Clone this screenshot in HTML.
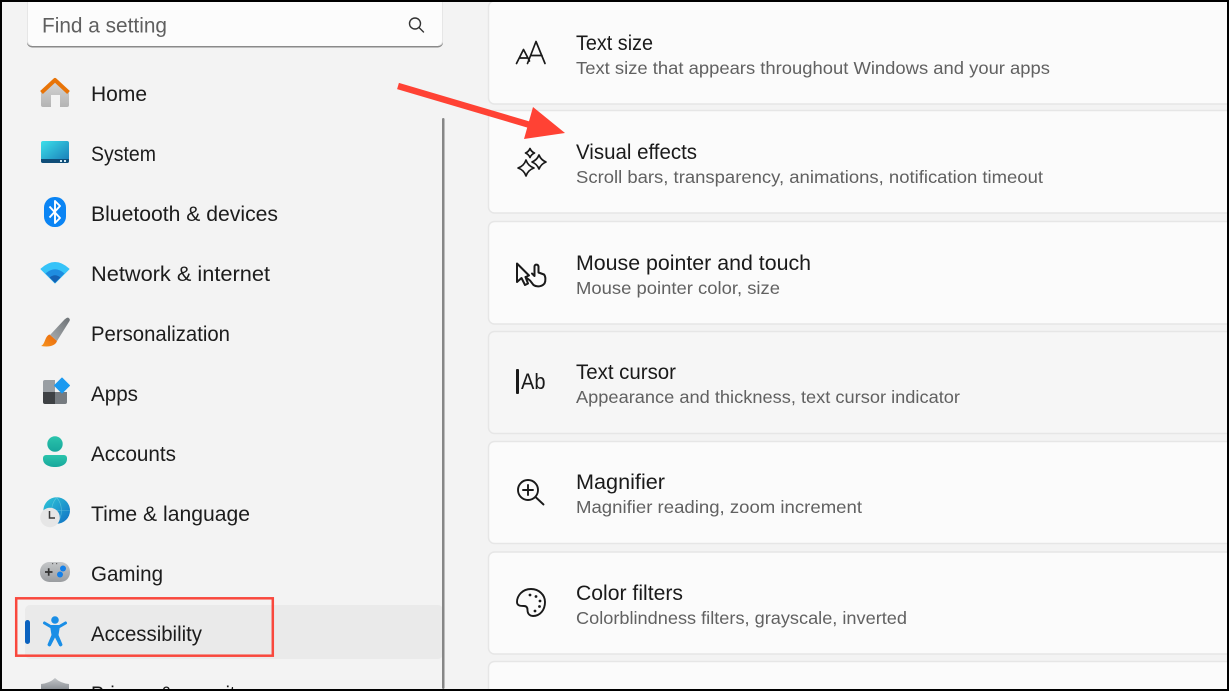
<!DOCTYPE html>
<html lang="en"><head><meta charset="utf-8"><title>Accessibility settings</title>
<style>
html,body{margin:0;padding:0;width:1229px;height:691px;overflow:hidden;background:#000}
svg{display:block}
text{font-family:"Liberation Sans",sans-serif}
.n{font-size:21px;fill:#1c1c1c}
.t{font-size:21px;fill:#1a1a1a}
.s{font-size:17.5px;fill:#616161}
.c{fill:#fbfbfb;stroke:#e6e6e6;stroke-width:1.5}
.i{fill:none;stroke:#1a1a1a;stroke-width:1.7;stroke-linecap:round;stroke-linejoin:round}
</style></head><body>
<svg width="1229" height="691" viewBox="0 0 1229 691" xmlns="http://www.w3.org/2000/svg">
<defs>
<linearGradient id="h" x1="0" y1="0" x2="0" y2="1"><stop offset="0" stop-color="#d8d8d8"/><stop offset="1" stop-color="#b4b4b4"/></linearGradient>
<linearGradient id="sy" x1="0" y1="0" x2="1" y2="1"><stop offset="0" stop-color="#3ce0ea"/><stop offset="1" stop-color="#1878b5"/></linearGradient>
<linearGradient id="br" x1="1" y1="0" x2="0" y2="1"><stop offset="0" stop-color="#6d7276"/><stop offset="1" stop-color="#a9adb0"/></linearGradient>
<linearGradient id="or" x1="0" y1="1" x2="1" y2="0"><stop offset="0" stop-color="#f7941d"/><stop offset="1" stop-color="#e8660c"/></linearGradient>
<linearGradient id="gl" x1="0" y1="0" x2="1" y2="1"><stop offset="0" stop-color="#2fc8d8"/><stop offset="1" stop-color="#0f6fc4"/></linearGradient>
<linearGradient id="ga" x1="0" y1="0" x2="0" y2="1"><stop offset="0" stop-color="#c4c6c8"/><stop offset="1" stop-color="#9a9da0"/></linearGradient>
<linearGradient id="te" x1="0" y1="0" x2="0" y2="1"><stop offset="0" stop-color="#2bc4ac"/><stop offset="1" stop-color="#17a79c"/></linearGradient>
<linearGradient id="sh" x1="0" y1="0" x2="0" y2="1"><stop offset="0" stop-color="#c2c5c8"/><stop offset="1" stop-color="#8f9398"/></linearGradient>
</defs>
<rect x="2" y="2" width="1225" height="687" fill="#f3f3f3"/>

<!-- search -->
<rect x="27" y="3" width="416" height="44.500" rx="5" fill="#8a8a8a"/>
<path d="M27 2H443V41a5 5 0 0 1-5 5H32a5 5 0 0 1-5-5Z" fill="#fcfcfc"/>
<path d="M27.500 2V41a4.500 4.500 0 0 0 4.500 4.500" fill="none" stroke="#e6e6e6"/>
<path d="M442.500 2V41a4.500 4.500 0 0 1-4.500 4.500" fill="none" stroke="#e6e6e6"/>
<text x="42" y="32.500" class="n" style="fill:#5f5f5f" textLength="125" lengthAdjust="spacingAndGlyphs">Find a setting</text>
<circle cx="415" cy="23.500" r="5.500" fill="none" stroke="#333" stroke-width="1.400"/>
<path d="M419 27.500l4.500 4.500" stroke="#333" stroke-width="1.400" stroke-linecap="round"/>

<!-- selected row -->
<rect x="25" y="605" width="418" height="54" rx="5" fill="#eaeaea"/>
<rect x="25" y="620" width="5" height="24" rx="2.500" fill="#0b62bf"/>

<!-- scrollbar -->
<rect x="442" y="118" width="2.500" height="571" rx="1.200" fill="#868686"/>

<!-- nav labels -->
<text x="91" y="101" class="n" textLength="56" lengthAdjust="spacingAndGlyphs">Home</text>
<text x="91" y="161" class="n" textLength="65" lengthAdjust="spacingAndGlyphs">System</text>
<text x="91" y="221" class="n" textLength="187" lengthAdjust="spacingAndGlyphs">Bluetooth &amp; devices</text>
<text x="91" y="281" class="n" textLength="179" lengthAdjust="spacingAndGlyphs">Network &amp; internet</text>
<text x="91" y="341" class="n" textLength="139" lengthAdjust="spacingAndGlyphs">Personalization</text>
<text x="91" y="401" class="n" textLength="47" lengthAdjust="spacingAndGlyphs">Apps</text>
<text x="91" y="461" class="n" textLength="85" lengthAdjust="spacingAndGlyphs">Accounts</text>
<text x="91" y="521" class="n" textLength="159" lengthAdjust="spacingAndGlyphs">Time &amp; language</text>
<text x="91" y="581" class="n" textLength="72" lengthAdjust="spacingAndGlyphs">Gaming</text>
<text x="91" y="641" class="n" textLength="111" lengthAdjust="spacingAndGlyphs">Accessibility</text>
<text x="91" y="701" class="n" textLength="154" lengthAdjust="spacingAndGlyphs">Privacy &amp; security</text>

<!-- nav icons -->
<path d="M41 107V91L55 79L69 91V105a2 2 0 0 1-2 2H60V95H51V107H43a2 2 0 0 1-2-2Z" fill="url(#h)"/>
<path d="M41.500 92.500L55 80L68.500 92.500" fill="none" stroke="#e87408" stroke-width="4" stroke-linejoin="round"/>

<rect x="41" y="141" width="28" height="22" rx="2" fill="url(#sy)"/>
<path d="M41 159H69V161a2 2 0 0 1-2 2H43a2 2 0 0 1-2-2Z" fill="#0f4d78"/>
<rect x="60" y="160" width="2" height="2" fill="#cfe8f4"/><rect x="64" y="160" width="2" height="2" fill="#cfe8f4"/>

<rect x="44" y="197" width="22" height="30" rx="10.500" fill="#0a84f4"/>
<path d="M49.500 206.500L60 218L55 223V201L60 206L49.500 217.500" fill="none" stroke="#fff" stroke-width="1.900" stroke-linejoin="round"/>

<path d="M41 269Q55 256 69 269L55 283Z" fill="#36c3f8" stroke="#36c3f8" stroke-linejoin="round"/>
<path d="M45.500 273.500Q55 265 64.500 273.500L55 283Z" fill="#1f8de0"/>
<path d="M49.500 277.500Q55 273 60.500 277.500L55 283Z" fill="#1462b4"/>

<path d="M66.500 318a2.200 2.200 0 0 1 3 3L57 341L50 335L64.500 319.500Z" fill="url(#br)"/>
<path d="M49.500 334.500L57 341C55.500 345.500 50 347.500 41 346C45.500 344 44.500 336.500 49.500 334.500Z" fill="url(#or)"/>

<path d="M43 382a2 2 0 0 1 2-2H55V392H43Z" fill="#999ea3"/>
<path d="M43 392H55V404H45a2 2 0 0 1-2-2Z" fill="#3e4144"/>
<path d="M55 392H67V402a2 2 0 0 1-2 2H55Z" fill="#767b80"/>
<path d="M62 378L69.500 385.500L62 393L54.500 385.500Z" fill="#1b9af0" stroke="#1b9af0" stroke-linejoin="round"/>

<circle cx="55" cy="444" r="7.700" fill="url(#te)"/>
<path d="M43 458a3 3 0 0 1 3-3H64a3 3 0 0 1 3 3V459C67 464 62 467 55 467S43 464 43 459Z" fill="url(#te)"/>

<circle cx="56.700" cy="510.500" r="13.300" fill="url(#gl)"/>
<path d="M43.500 510.500H70M56.700 497.500C50 505 50 516 56.700 524C63 516 63 505 56.700 497.500Z" fill="none" stroke="#9fe4ee" stroke-width=".6" opacity=".45"/>
<circle cx="50" cy="517.500" r="9.800" fill="#e6e6e6"/>
<path d="M49.500 511V518H55" fill="none" stroke="#3a3a3a" stroke-width="1.500"/>

<rect x="40" y="562" width="30" height="20" rx="9.500" fill="url(#ga)"/>
<path d="M45 572H52.500M48.700 568.300V575.700" stroke="#333" stroke-width="1.700"/>
<circle cx="63" cy="568.500" r="3" fill="#1580e8"/><circle cx="60" cy="574.500" r="3" fill="#1580e8"/>
<rect x="52" y="563" width="1.200" height="1.200" fill="#666"/><rect x="56" y="563" width="1.200" height="1.200" fill="#666"/>

<circle cx="55" cy="620" r="3.800" fill="#1a8ee6"/>
<path d="M44.500 623L50.500 626.500H59.500L65.500 623" fill="none" stroke="#1a8ee6" stroke-width="3" stroke-linecap="round" stroke-linejoin="round"/>
<path d="M50 626H60L58.500 635L62.500 644.500A1.900 1.900 0 0 1 59.200 645.800L55 637.500L50.800 645.800A1.900 1.900 0 0 1 47.500 644.500L51.500 635Z" fill="#1a8ee6"/>

<path d="M41 684Q50 683 55 678Q60 683 69 684V689H41Z" fill="url(#sh)"/>

<!-- cards -->
<rect x="488.500" y="1" width="745" height="103" rx="6" class="c"/>
<rect x="488.500" y="110.500" width="745" height="102.500" rx="6" class="c"/>
<rect x="488.500" y="221.500" width="745" height="102.500" rx="6" class="c"/>
<rect x="488.500" y="331.500" width="745" height="102" rx="6" class="c" style="fill:#f6f6f6"/>
<rect x="488.500" y="441.500" width="745" height="102" rx="6" class="c"/>
<rect x="488.500" y="552" width="745" height="102" rx="6" class="c"/>
<rect x="488.500" y="661.500" width="745" height="60" rx="6" class="c"/>

<text x="576" y="50" class="t" textLength="77" lengthAdjust="spacingAndGlyphs">Text size</text>
<text x="576" y="74" class="s" textLength="474" lengthAdjust="spacingAndGlyphs">Text size that appears throughout Windows and your apps</text>
<text x="576" y="159" class="t" textLength="121" lengthAdjust="spacingAndGlyphs">Visual effects</text>
<text x="576" y="183" class="s" textLength="467" lengthAdjust="spacingAndGlyphs">Scroll bars, transparency, animations, notification timeout</text>
<text x="576" y="270" class="t" textLength="235" lengthAdjust="spacingAndGlyphs">Mouse pointer and touch</text>
<text x="576" y="294" class="s" textLength="204" lengthAdjust="spacingAndGlyphs">Mouse pointer color, size</text>
<text x="576" y="379" class="t" textLength="100" lengthAdjust="spacingAndGlyphs">Text cursor</text>
<text x="576" y="403" class="s" textLength="384" lengthAdjust="spacingAndGlyphs">Appearance and thickness, text cursor indicator</text>
<text x="576" y="489" class="t" textLength="89" lengthAdjust="spacingAndGlyphs">Magnifier</text>
<text x="576" y="513" class="s" textLength="286" lengthAdjust="spacingAndGlyphs">Magnifier reading, zoom increment</text>
<text x="576" y="600" class="t" textLength="107" lengthAdjust="spacingAndGlyphs">Color filters</text>
<text x="576" y="624" class="s" textLength="331" lengthAdjust="spacingAndGlyphs">Colorblindness filters, grayscale, inverted</text>

<!-- card icons -->
<path class="i" d="M516.500 63.500L523.500 49.500L529.500 61M519.500 58H527M527.500 63.500L536 41.500L545 63.500M531 55.500H542"/>
<path class="i" d="M530 148.500Q531.300 151.700 534.500 153Q531.300 154.300 530 157.500Q528.700 154.300 525.500 153Q528.700 151.700 530 148.500Z"/>
<path class="i" d="M539 155Q541 160 546 162Q541 164 539 169Q537 164 532 162Q537 160 539 155Z"/>
<path class="i" d="M526 160Q528 166 534 168Q528 170 526 176Q524 170 518 168Q524 166 526 160Z"/>

<path class="i" style="stroke-width:2" d="M517 263.500V282L521.500 278L525 285L528 283.500L525.500 277L529 275.500Z"/>
<path class="i" style="stroke-width:2" d="M525.500 277L530 280.500L533.500 285C537 287.500 542 286.500 544.500 283.500C546 280.500 545.500 276 544 274.500L538.500 272.500V266.500C538 264 534.500 264 534.500 266.500V276L532 273.500"/>

<rect x="516" y="369" width="3" height="25" rx="1" fill="#1a1a1a"/>
<text x="521" y="389" style="font-size:22px;fill:#1a1a1a" textLength="24.500" lengthAdjust="spacingAndGlyphs">Ab</text>

<circle cx="528" cy="490" r="10" class="i" style="stroke-width:1.900"/>
<path class="i" style="stroke-width:1.900" d="M528 485V495M523 490H533M535.500 497L543.500 504.500"/>

<path class="i" style="stroke-width:1.900" d="M531 589C522 589 517 596 517 602C517 606 521 606 524 606C527 606 527.500 608 527.500 610C527.500 614 530 616 533 616C540 616 545 610 545 602C545 595 539 589 531 589Z"/>
<circle cx="530" cy="595" r="1.400" fill="#1a1a1a"/><circle cx="536" cy="596.500" r="1.400" fill="#1a1a1a"/><circle cx="540" cy="601" r="1.400" fill="#1a1a1a"/><circle cx="539.500" cy="606.500" r="1.400" fill="#1a1a1a"/><circle cx="535" cy="611" r="1.400" fill="#1a1a1a"/>

<!-- annotations -->
<rect x="16.200" y="598.300" width="256.600" height="57.400" fill="none" stroke="#f9483d" stroke-width="2.500"/>
<path d="M398 86L530 125" stroke="#ff4234" stroke-width="6.500"/>
<path d="M565 133L533 107L524 139Z" fill="#ff4234"/>

<!-- frame -->
<path fill-rule="evenodd" d="M0 0H1229V691H0ZM2 2V689H1227V2Z" fill="#000"/>
</svg>
</body></html>
